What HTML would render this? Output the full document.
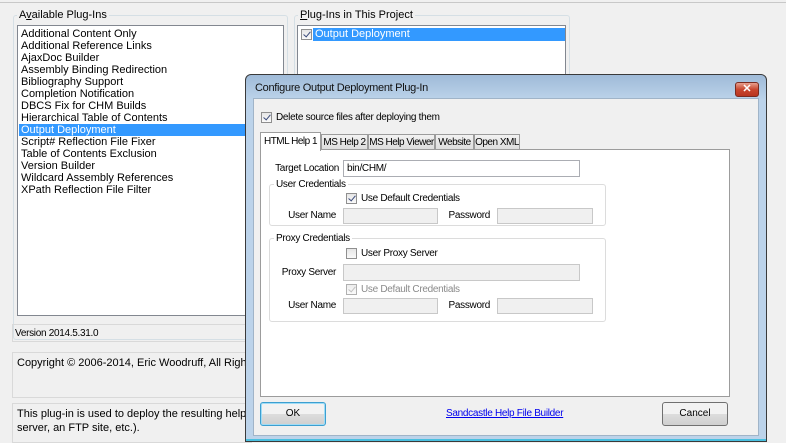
<!DOCTYPE html>
<html><head><meta charset="utf-8"><style>
*{box-sizing:border-box;margin:0;padding:0}
body{width:786px;height:442px;overflow:hidden;background:#f0f0f0;font-family:"Liberation Sans",sans-serif;font-size:11px;color:#000;position:relative}
.a{position:absolute;white-space:nowrap}
.d{font-size:10px;letter-spacing:-0.3px}
.r{text-align:right}
.grp{position:absolute;border:1px solid #d5dfe5;border-radius:3px}
.lbl{position:absolute;background:#f0f0f0;padding:0 2px;line-height:12px}
.inp{position:absolute;border:1px solid #abadb3;background:#fff}
.dis{background:#f0f0f0;border-color:#c8c8c8}
.cb{position:absolute;width:11px;height:11px;border:1px solid #8f8f8f;background:linear-gradient(#e6e6e6,#fafafa)}
.cb.c::after{content:"";position:absolute;left:3px;top:0px;width:3px;height:6px;border:solid #3a4a7a;border-width:0 1.5px 1.5px 0;transform:rotate(40deg)}
.cb.g::after{border-color:#a8a8a8}
.li{position:absolute;left:1px;height:12px;line-height:12px;padding-left:2px;font-size:11px;width:264px}
.tab{position:absolute;top:133px;height:16px;border:1px solid #9c9c9c;border-bottom:none;background:linear-gradient(#f2f2f2,#dcdcdc);line-height:15px;text-align:center;font-size:10px;letter-spacing:-0.5px;overflow:hidden}
.btn{position:absolute;height:24px;border:1px solid #707070;border-radius:3px;background:linear-gradient(#f2f2f2 50%,#dddddd 50%,#cfcfcf);text-align:center;line-height:22px;font-size:10px}
</style></head><body>
<div class="a" style="left:0;top:0;width:786px;height:3px;border-bottom:1px solid #c8c8c8"></div>

<div class="grp" style="left:13px;top:15px;width:275px;height:325px"></div>
<div class="lbl" style="left:17px;top:9px;font-size:11px">A<u>v</u>ailable Plug-Ins</div>
<div class="inp" style="left:17px;top:25px;width:267px;height:291px;border-color:#828790">
<div class="li" style="top:2px">Additional Content Only</div>
<div class="li" style="top:14px">Additional Reference Links</div>
<div class="li" style="top:26px">AjaxDoc Builder</div>
<div class="li" style="top:38px">Assembly Binding Redirection</div>
<div class="li" style="top:50px">Bibliography Support</div>
<div class="li" style="top:62px">Completion Notification</div>
<div class="li" style="top:74px">DBCS Fix for CHM Builds</div>
<div class="li" style="top:86px">Hierarchical Table of Contents</div>
<div class="li" style="top:98px;background:#3399ff;color:#fff">Output Deployment</div>
<div class="li" style="top:110px">Script# Reflection File Fixer</div>
<div class="li" style="top:122px">Table of Contents Exclusion</div>
<div class="li" style="top:134px">Version Builder</div>
<div class="li" style="top:146px">Wildcard Assembly References</div>
<div class="li" style="top:158px">XPath Reflection File Filter</div>
</div>

<div class="grp" style="left:294px;top:15px;width:276px;height:80px"></div>
<div class="lbl" style="left:298px;top:9px"><u>P</u>lug-Ins in This Project</div>
<div class="inp" style="left:297px;top:25px;width:269px;height:60px;border-color:#828790">
<div class="cb c" style="left:3px;top:3px"></div>
<div class="a" style="left:15px;top:2px;width:252px;height:13px;background:#3399ff;color:#fff;padding-left:2px;line-height:13px">Output Deployment</div>
</div>

<div class="a" style="left:12px;top:324px;width:240px;height:18px;border:1px solid #d9d9d9;border-right:none;padding:2px 2px;line-height:14px;font-size:10px;letter-spacing:-0.3px">Version 2014.5.31.0</div>
<div class="a" style="left:12px;top:352px;width:240px;height:46px;border:1px solid #d9d9d9;border-right:none;padding:4px 4px">Copyright © 2006-2014, Eric Woodruff, All Rights Reserved</div>
<div class="a" style="left:12px;top:403px;width:240px;height:40px;border:1px solid #d9d9d9;border-right:none;padding:3px 4px;line-height:14px">This plug-in is used to deploy the resulting help file output<br>server, an FTP site, etc.).</div>

<div class="a" style="left:245px;top:74px;width:522px;height:368px;border:1px solid #3a3a3a;border-radius:6px 6px 0 0;background:linear-gradient(#9fbad8,#bcd3ea 25px,#bcd3ea);overflow:hidden">
<div class="a" style="left:0;right:0;bottom:0;height:2px;background:#4ac0e0"></div>
<div class="a" style="left:9px;top:7px;font-size:11px;letter-spacing:-0.3px;color:#111">Configure Output Deployment Plug-In</div>
<div class="a" style="left:489px;top:7px;width:24px;height:15px;border:1px solid #7a2b20;border-radius:3px;background:linear-gradient(#e8a08e,#c9462e 50%,#b83520);color:#fff;font-weight:bold;text-align:center;line-height:13px;font-size:11px">✕</div>
<div class="a" style="left:7px;top:23px;width:506px;height:338px;background:#f0f0f0;border:1px solid #a0b4c8">
<div class="cb c" style="left:7px;top:13px"></div>
<div class="a d" style="left:22px;top:13px">Delete source files after deploying them</div>
<div class="tab" style="left:67px;top:35px;width:47px">MS Help 2</div>
<div class="tab" style="left:114px;top:35px;width:67px">MS Help Viewer</div>
<div class="tab" style="left:181px;top:35px;width:39px">Website</div>
<div class="tab" style="left:220px;top:35px;width:46px">Open XML</div>
<div class="a" style="left:6px;top:50px;width:470px;height:248px;background:#fff;border:1px solid #9c9c9c"></div>
<div class="tab" style="left:6px;top:33px;width:61px;height:19px;background:#fff;z-index:2;line-height:17px">HTML Help 1</div>
</div>
</div>

<div class="a d r" style="left:240px;width:99px;top:163px">Target Location</div>
<div class="inp d" style="left:343px;top:160px;width:237px;height:17px;padding:2px 3px">bin/CHM/</div>
<div class="grp" style="left:269px;top:184px;width:337px;height:42px;background:#fff;border-color:#dcdcdc"></div>
<div class="lbl d" style="left:274px;top:179px;background:#fff">User Credentials</div>
<div class="cb c" style="left:346px;top:193px"></div>
<div class="a d" style="left:361px;top:193px">Use Default Credentials</div>
<div class="a d r" style="left:240px;width:96px;top:210px">User Name</div>
<div class="inp dis" style="left:343px;top:208px;width:95px;height:16px"></div>
<div class="a d r" style="left:440px;width:50px;top:210px">Password</div>
<div class="inp dis" style="left:497px;top:208px;width:96px;height:16px"></div>

<div class="grp" style="left:269px;top:238px;width:337px;height:84px;background:#fff;border-color:#dcdcdc"></div>
<div class="lbl d" style="left:274px;top:233px;background:#fff">Proxy Credentials</div>
<div class="cb" style="left:346px;top:248px"></div>
<div class="a d" style="left:361px;top:248px">User Proxy Server</div>
<div class="a d r" style="left:240px;width:96px;top:267px">Proxy Server</div>
<div class="inp dis" style="left:343px;top:264px;width:237px;height:17px"></div>
<div class="cb c g" style="left:346px;top:284px;opacity:.7"></div>
<div class="a d" style="left:361px;top:284px;color:#8a8a8a">Use Default Credentials</div>
<div class="a d r" style="left:240px;width:96px;top:300px">User Name</div>
<div class="inp dis" style="left:343px;top:298px;width:95px;height:16px"></div>
<div class="a d r" style="left:440px;width:50px;top:300px">Password</div>
<div class="inp dis" style="left:497px;top:298px;width:96px;height:16px"></div>

<div class="btn" style="left:260px;top:402px;width:66px;border-color:#3c9fd0;box-shadow:inset 0 0 0 1px #9fdcf6">OK</div>
<div class="a d" style="left:446px;top:408px;color:#0000ee;text-decoration:underline">Sandcastle Help File Builder</div>
<div class="btn" style="left:662px;top:402px;width:66px">Cancel</div>
</body></html>
